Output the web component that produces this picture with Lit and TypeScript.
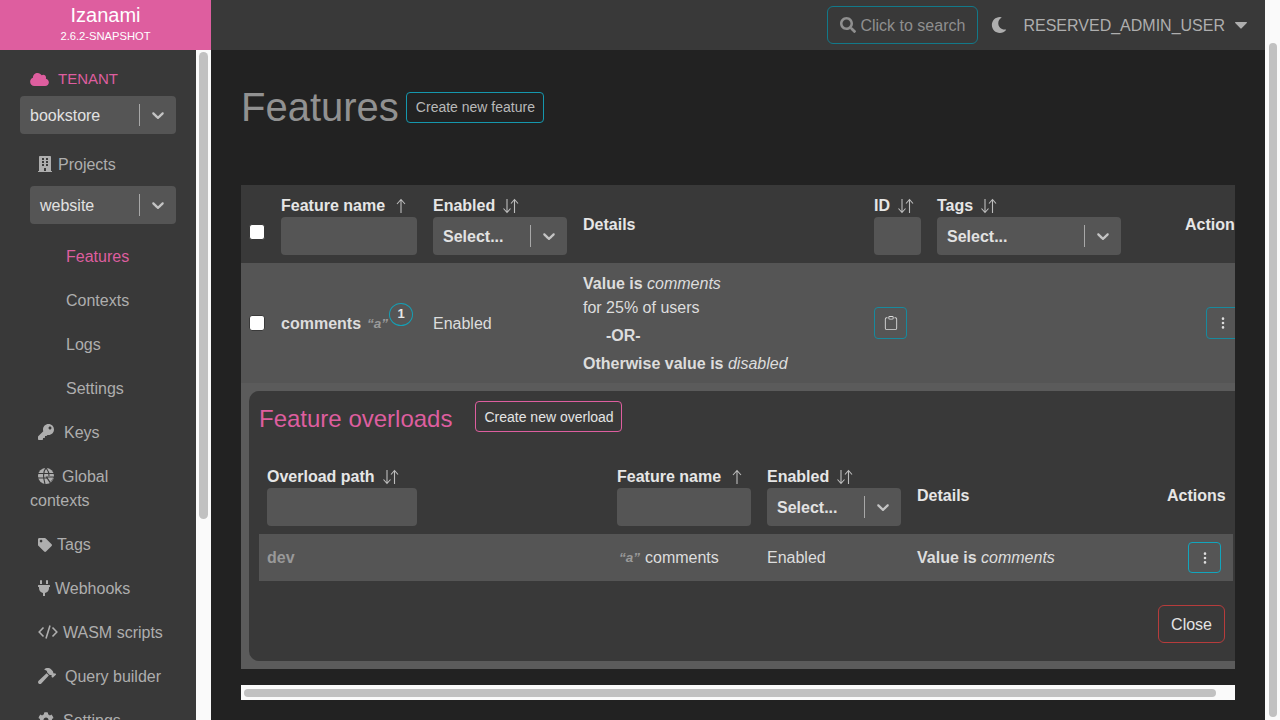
import { LitElement, html, css, svg } from 'lit';
import { customElement } from 'lit/decorators.js';

const ICONS: Record<string, [string, string]> = {
  cloud: ['0 0 640 512', 'M537.6 226.6c4.1-10.7 6.4-22.4 6.4-34.6 0-53-43-96-96-96-19.7 0-38.1 6-53.3 16.2C367 64.2 315.3 32 256 32c-88.4 0-160 71.6-160 160 0 2.7.1 5.4.2 8.1C40.2 219.8 0 273.2 0 336c0 79.5 64.5 144 144 144h368c70.7 0 128-57.3 128-128 0-61.9-44-113.6-102.4-125.4z'],
  building: ['0 0 448 512', 'M436 480h-20V24c0-13.255-10.745-24-24-24H56C42.745 0 32 10.745 32 24v456H12c-6.627 0-12 5.373-12 12v20h448v-20c0-6.627-5.373-12-12-12zM128 76c0-6.627 5.373-12 12-12h40c6.627 0 12 5.373 12 12v40c0 6.627-5.373 12-12 12h-40c-6.627 0-12-5.373-12-12V76zm0 96c0-6.627 5.373-12 12-12h40c6.627 0 12 5.373 12 12v40c0 6.627-5.373 12-12 12h-40c-6.627 0-12-5.373-12-12v-40zm52 148h-40c-6.627 0-12-5.373-12-12v-40c0-6.627 5.373-12 12-12h40c6.627 0 12 5.373 12 12v40c0 6.627-5.373 12-12 12zm76 160h-64v-84c0-6.627 5.373-12 12-12h40c6.627 0 12 5.373 12 12v84zm64-172c0 6.627-5.373 12-12 12h-40c-6.627 0-12-5.373-12-12v-40c0-6.627 5.373-12 12-12h40c6.627 0 12 5.373 12 12v40zm0-96c0 6.627-5.373 12-12 12h-40c-6.627 0-12-5.373-12-12v-40c0-6.627 5.373-12 12-12h40c6.627 0 12 5.373 12 12v40zm0-96c0 6.627-5.373 12-12 12h-40c-6.627 0-12-5.373-12-12V76c0-6.627 5.373-12 12-12h40c6.627 0 12 5.373 12 12v40z'],
  key: ['0 0 512 512', 'M512 176.001C512 273.203 433.202 352 336 352c-11.22 0-22.19-1.062-32.827-3.069l-24.012 27.014A23.999 23.999 0 0 1 261.223 384H224v40c0 13.255-10.745 24-24 24h-40v40c0 13.255-10.745 24-24 24H24c-13.255 0-24-10.745-24-24v-78.059c0-6.365 2.529-12.47 7.029-16.971l161.802-161.802C163.108 213.814 160 195.271 160 176 160 78.798 238.797.001 335.999 0 433.488-.001 512 78.511 512 176.001zM336 128c0 26.51 21.49 48 48 48s48-21.49 48-48-21.49-48-48-48-48 21.49-48 48z'],
  tag: ['0 0 512 512', 'M0 252.118V48C0 21.49 21.49 0 48 0h204.118a48 48 0 0 1 33.941 14.059l211.882 211.882c18.745 18.745 18.745 49.137 0 67.882L293.823 497.941c-18.745 18.745-49.137 18.745-67.882 0L14.059 286.059A48 48 0 0 1 0 252.118zM112 64c-26.51 0-48 21.49-48 48s21.49 48 48 48 48-21.49 48-48-21.49-48-48-48z'],
  plug: ['0 0 384 512', 'M320,32a32,32,0,0,0-64,0v96h64Zm48,128H16A16,16,0,0,0,0,176v32a16,16,0,0,0,16,16H32v32A160.07,160.07,0,0,0,160,412.8V512h64V412.8A160.07,160.07,0,0,0,352,256V224h16a16,16,0,0,0,16-16V176A16,16,0,0,0,368,160ZM128,32a32,32,0,0,0-64,0v96h64Z'],
  hammer: ['0 0 576 512', 'M571.31 193.94l-22.63-22.63c-6.25-6.25-16.38-6.25-22.63 0l-11.31 11.31-28.9-28.9c5.63-21.31.36-44.9-16.35-61.61l-45.25-45.25c-62.48-62.48-163.79-62.48-226.28 0l90.51 45.25v18.75c0 16.97 6.74 33.25 18.75 45.25l49.14 49.14c16.71 16.71 40.3 21.98 61.61 16.35l28.9 28.9-11.31 11.31c-6.25 6.25-6.25 16.38 0 22.63l22.63 22.63c6.25 6.25 16.38 6.25 22.63 0l90.51-90.51c6.23-6.24 6.23-16.37-.01-22.62zm-286.72-15.2c-3.7-3.7-6.84-7.79-9.85-11.95L19.64 404.96c-25.57 23.88-26.26 64.19-1.53 88.93s65.05 24.05 88.93-1.53l238.13-255.07c-3.96-2.91-7.9-5.87-11.44-9.41l-49.14-49.14z'],
  gear: ['0 0 512 512', 'M487.4 315.7l-42.6-24.6c4.3-23.2 4.3-47 0-70.2l42.6-24.6c4.9-2.8 7.1-8.6 5.5-14-11.1-35.6-30-67.8-54.7-94.6-3.8-4.1-10-5.1-14.8-2.3L380.8 110c-17.9-15.4-38.5-27.3-60.8-35.1V25.8c0-5.6-3.9-10.5-9.4-11.7-36.7-8.2-74.3-7.8-109.2 0-5.5 1.2-9.4 6.1-9.4 11.7V75c-22.2 7.9-42.8 19.8-60.8 35.1L88.7 85.5c-4.9-2.8-11-1.9-14.8 2.3-24.7 26.7-43.6 58.9-54.7 94.6-1.7 5.4.6 11.2 5.5 14L67.3 221c-4.3 23.2-4.3 47 0 70.2l-42.6 24.6c-4.9 2.8-7.1 8.6-5.5 14 11.1 35.6 30 67.8 54.7 94.6 3.8 4.1 10 5.1 14.8 2.3l42.6-24.6c17.9 15.4 38.5 27.3 60.8 35.1v49.2c0 5.6 3.9 10.5 9.4 11.7 36.7 8.2 74.3 7.8 109.2 0 5.5-1.2 9.4-6.1 9.4-11.7v-49.2c22.2-7.9 42.8-19.8 60.8-35.1l42.6 24.6c4.9 2.8 11 1.9 14.8-2.3 24.7-26.7 43.6-58.9 54.7-94.6 1.5-5.5-.7-11.3-5.6-14.1zM256 336c-44.1 0-80-35.9-80-80s35.9-80 80-80 80 35.9 80 80-35.9 80-80 80z'],
  moon: ['0 0 512 512', 'M283.211 512c78.962 0 151.079-35.925 198.857-94.792 7.068-8.708-.639-21.43-11.562-19.35-124.203 23.654-238.262-71.576-238.262-196.954 0-72.222 38.662-138.635 101.498-174.394 9.686-5.512 7.25-20.197-3.756-22.23A258.156 258.156 0 0 0 283.211 0c-141.309 0-256 114.511-256 256 0 141.309 114.511 256 256 256z'],
  search: ['0 0 512 512', 'M505 442.7L405.3 343c-4.5-4.5-10.6-7-17-7H372c27.6-35.3 44-79.7 44-128C416 93.1 322.9 0 208 0S0 93.1 0 208s93.1 208 208 208c48.3 0 92.7-16.4 128-44v16.3c0 6.4 2.5 12.5 7 17l99.7 99.7c9.4 9.4 24.6 9.4 33.9 0l28.3-28.3c9.4-9.4 9.4-24.6.1-34zM208 336c-70.7 0-128-57.2-128-128 0-70.7 57.2-128 128-128 70.7 0 128 57.2 128 128 0 70.7-57.2 128-128 128z'],
  clipboard: ['0 0 16 16', 'M4 1.5H3a2 2 0 0 0-2 2V14a2 2 0 0 0 2 2h10a2 2 0 0 0 2-2V3.5a2 2 0 0 0-2-2h-1v1h1a1 1 0 0 1 1 1V14a1 1 0 0 1-1 1H3a1 1 0 0 1-1-1V3.5a1 1 0 0 1 1-1h1v-1zM9.5 1a.5.5 0 0 1 .5.5v1a.5.5 0 0 1-.5.5h-3a.5.5 0 0 1-.5-.5v-1a.5.5 0 0 1 .5-.5h3zm-3-1A1.5 1.5 0 0 0 5 1.5v1A1.5 1.5 0 0 0 6.5 4h3A1.5 1.5 0 0 0 11 2.5v-1A1.5 1.5 0 0 0 9.5 0h-3z'],
  dots: ['0 0 16 16', 'M9.5 13a1.5 1.5 0 1 1-3 0 1.5 1.5 0 0 1 3 0zm0-5a1.5 1.5 0 1 1-3 0 1.5 1.5 0 0 1 3 0zm0-5a1.5 1.5 0 1 1-3 0 1.5 1.5 0 0 1 3 0z'],
  chevron: ['0 0 20 20', 'M4.516 7.548c0.436-0.446 1.043-0.481 1.576 0l3.908 3.747 3.908-3.747c0.533-0.481 1.141-0.446 1.574 0 0.436 0.445 0.408 1.197 0 1.615-0.406 0.418-4.695 4.502-4.695 4.502-0.217 0.223-0.502 0.335-0.787 0.335s-0.57-0.112-0.789-0.335c0 0-4.287-4.084-4.695-4.502s-0.436-1.17 0-1.615z'],
  caret: ['0 0 12 7', 'M0.6 0h10.8c.5 0 .8.6.4 1L6.4 6.6c-.2.2-.6.2-.8 0L.2 1C-.2.6.1 0 .6 0z'],
};

const icon = (name: string, w: number, h = w) => {
  const [box, d] = ICONS[name];
  return html`<svg class="icon" width=${w} height=${h} viewBox=${box} fill="currentColor"><path d=${d}></path></svg>`;
};

// the reference globe: a disc cut by grid lines with a small down triangle at the lower right
const globeIcon = html`<svg class="icon" width="16" height="16" viewBox="0 0 16 16">
  <circle cx="8" cy="8" r="8" fill="currentColor"></circle>
  <path d="M0 5.5h16M0 10h9M8 0C5 3 5 9 7 16M8 0c2 2 3 4 3 8" fill="none" stroke="#393939" stroke-width="1.1"></path>
  <path d="M7.5 8.5h9L12 15.5z" fill="#393939"></path>
  <path d="M9.5 9.5h6L12.5 14z" fill="currentColor"></path>
</svg>`;

const codeIcon = html`<svg class="icon" width="20" height="16" viewBox="0 0 20 16" fill="none" stroke="currentColor" stroke-width="1.6">
  <path d="M5.5 3.5 1.2 8l4.3 4.5M14.5 3.5 18.8 8l-4.3 4.5M12 1.5 8 14.5"></path>
</svg>`;

// thin sort arrows, both or only the up one when the column is sorted
const sortIcon = (upOnly = false) => html`<svg class="sort" width="18" height="16" viewBox="0 0 18 16" fill="none" stroke="currentColor" stroke-width="1.1">
  ${upOnly
    ? svg`<path d="M9 15V1.5M5 6l4-4.5L13 6"></path>`
    : svg`<path d="M5 1v13.5M1.5 10.5 5 14.5l3.5-4M12.5 15V1.5M9 5.5l3.5-4 3.5 4"></path>`}
</svg>`;

const select = (label: string, cls = '') => html`<div class="select ${cls}">
  <span class="select-value">${label}</span>
  <span class="select-sep"></span>
  <span class="select-arrow">${icon('chevron', 20)}</span>
</div>`;

const column = (label: string, sort: boolean, filter: unknown) => html`<div class="cell head-cell">
  <div class="head-title">${label}${sortIcon(sort)}</div>
  ${filter}
</div>`;

@customElement('app-root')
export class AppRoot extends LitElement {
  static styles = css`
    :host {
      display: grid;
      grid-template-columns: 211px 1fr 15px;
      width: 1280px;
      height: 720px;
      overflow: hidden;
      background: #222222;
      color: #dddddd;
      font-family: 'Liberation Sans', Arial, sans-serif;
      font-size: 16px;
      line-height: 24px;
    }
    .icon { display: block; flex: none; }

    .side { display: flex; flex-direction: column; height: 720px; overflow: hidden; }
    .logo {
      height: 50px;
      flex: none;
      box-sizing: border-box;
      padding-top: 3px;
      background: #de5e9f;
      color: #ffffff;
      text-align: center;
    }
    .logo-name { font-size: 20px; line-height: 24px; }
    .logo-version { font-size: 11.2px; line-height: 16px; margin-top: 1px; }
    .side-body { flex: 1; display: flex; min-height: 0; }
    .nav { width: 196px; flex: none; background: #393939; padding-top: 16px; overflow: hidden; color: #aeaeae; }
    .side-bar { width: 15px; flex: none; box-sizing: border-box; background: #fafafa; padding: 2px 3px; }
    .side-thumb { width: 9px; height: 467px; border-radius: 5px; background: #c1c1c1; }
    .tenant {
      display: flex;
      align-items: center;
      gap: 9px;
      margin-left: 30px;
      color: #de5e9f;
      font-size: 15px;
      height: 24px;
      padding-top: 1px;
      margin-bottom: 5px;
    }
    .nav-item { padding: 11px 30px 9px 30px; }
    .nav-item.sub { padding-left: 66px; }
    .nav-item.active { color: #de5e9f; }
    .nav-icon { display: inline-flex; align-items: center; height: 16px; vertical-align: -2px; margin-left: 8px; }

    .select {
      display: flex;
      align-items: center;
      height: 38px;
      box-sizing: border-box;
      border-radius: 4px;
      background: #555555;
      color: #e2e2e2;
      padding-left: 10px;
    }
    .select-value { flex: 1; font-weight: 400; padding-top: 2px; }
    .select-sep { width: 1px; height: 22px; background: #a8a8a8; }
    .select-arrow { width: 36px; display: flex; justify-content: center; color: #c4c4c4; }
    .select.tenant-select { margin: 0 20px 8px; }
    .select.project-select { margin: 0 20px 10px 30px; }
    .select.filter .select-value { font-weight: 700; }
    .select.tags-filter { width: 184px; }

    .content { display: flex; flex-direction: column; height: 720px; min-width: 0; }
    .topbar {
      height: 50px;
      flex: none;
      background: #393939;
      display: flex;
      align-items: center;
      justify-content: flex-end;
      padding-right: 18px;
      color: #aeaeae;
    }
    .search {
      display: flex;
      align-items: center;
      gap: 4px;
      box-sizing: border-box;
      width: 151px;
      height: 38px;
      padding-left: 12px;
      border: 1px solid #12798a;
      border-radius: 6px;
      color: #8f8f8f;
    }
    .topbar-text { padding-top: 2px; }
    .moon { margin: 0 16px 0 13px; }
    .user { margin-right: 10px; }

    .main { flex: 1; min-height: 0; padding: 34px 30px 0; }
    .title-row { display: flex; align-items: center; gap: 7px; height: 46px; margin-bottom: 55px; }
    h1 { margin: 0; font-size: 40px; line-height: 46px; font-weight: 400; color: #919191; }
    .btn {
      box-sizing: border-box;
      background: transparent;
      font: inherit;
      border: 1px solid #1597ad;
      border-radius: 4px;
      color: #b9b9b9;
      display: inline-flex;
      align-items: center;
      justify-content: center;
    }
    .btn-sm { height: 31px; padding: 0 8px 0 9px; font-size: 14px; line-height: 21px; }
    .btn-icon { width: 33px; height: 32px; padding: 0; color: #dddddd; border-color: #178a9e; }
    .btn-pink { border-color: #de5e9f; color: #e4e4e4; padding: 2px 7px 0 8px; }
    .btn-close { height: 38px; padding: 2px 12px 0; border-color: #b73c3c; color: #e4e4e4; border-radius: 6px; }

    .table-wrap { width: 994px; overflow: hidden; }
    .table { width: 1010px; }
    .row { display: grid; grid-template-columns: 32px 152px 150px 291px 63px 248px 74px; }
    .row.head { background: #393939; }
    .row.body { background: #555555; height: 120px; }
    .cell { padding: 8px; min-width: 0; display: flex; flex-direction: column; justify-content: center; }
    .cell.t { padding-top: 9px; padding-bottom: 7px; }
    .head-cell { justify-content: flex-start; }
    .head-title {
      display: flex;
      align-items: center;
      gap: 7px;
      box-sizing: border-box;
      height: 24px;
      padding-top: 2px;
      font-weight: 700;
      color: #e6e6e6;
      white-space: nowrap;
    }
    .sort { color: #bdbdbd; flex: none; }
    .head-plain { font-weight: 700; color: #e6e6e6; white-space: nowrap; }
    .input { height: 38px; border-radius: 4px; background: #555555; }
    .input.path { width: 150px; }
    .check {
      appearance: none;
      box-sizing: border-box;
      width: 16px;
      height: 16px;
      margin: 0;
      background: #ffffff;
      border: 1px solid #3a3a3a;
      border-radius: 3px;
    }
    .check.head-check { margin-top: 16px; border-color: #393939; }
    .name { font-weight: 700; }
    .name-line { display: flex; align-items: center; white-space: nowrap; }
    .alias { font-style: italic; font-weight: 700; font-size: 13.5px; color: #9a9a9a; margin-left: 6px; }
    .count { position: relative; width: 0; height: 24px; }
    .count-badge {
      position: absolute;
      left: 1px;
      top: -9px;
      box-sizing: border-box;
      width: 24px;
      height: 23px;
      border: 1.5px solid #14a0b6;
      border-radius: 50%;
      color: #e8e8e8;
      font-size: 13px;
      font-weight: 700;
      line-height: 20px;
      text-align: center;
    }
    .or { font-weight: 700; margin: 4px 0; padding-left: 23px; }
    b { font-weight: 700; }
    .details-line { white-space: nowrap; }
    .action-btn { margin-left: 21px; }

    .expand { background: #5b5b5b; padding: 8px; width: 1010px; box-sizing: border-box; }
    .panel { background: #393939; border-radius: 10px 0 0 10px; padding: 10px 10px 18px; height: 270px; box-sizing: border-box; }
    .panel-head { display: flex; align-items: center; gap: 23px; height: 31px; margin-bottom: 24px; }
    h2 { margin: 0; padding-top: 4px; font-size: 24px; line-height: 34px; font-weight: 400; color: #de5e9f; }
    .sub-row { display: grid; grid-template-columns: 350px 150px 150px 250px 74px; }
    .sub-row.body { height: 47px; align-items: center; background: #555555; }
    .sub-row .cell { padding: 0 8px; }
    .sub-row.head-row .cell { padding: 8px; }
    .sub-row.head-row .cell.t { padding: 9px 8px 7px; }
    .dev { font-weight: 700; color: #999999; }
    .inline { display: flex; align-items: center; white-space: nowrap; }
    .alias.lead { margin: 0 5px 0 2px; }
    .btn-icon.bright { border-color: #12a5bd; height: 31px; }
    .panel-foot { display: flex; justify-content: flex-end; padding: 24px 8px 0 0; }

    .h-scroll { width: 994px; height: 15px; margin-top: 16px; box-sizing: border-box; background: #fafafa; padding: 4px 3px; }
    .h-thumb { width: 972px; height: 8px; border-radius: 4px; background: #c1c1c1; }

    .page-bar { background: #fafafa; padding: 43px 3px 3px 4px; height: 720px; box-sizing: border-box; }
    .page-thumb { width: 8px; height: 100%; border-radius: 4px; background: #c1c1c1; }
  `;

  private navItem(glyph: unknown, gap: number, label: string) {
    return html`<div class="nav-item"><span class="nav-icon">${glyph}</span><span style="margin-left:${gap}px">${label}</span></div>`;
  }

  render() {
    return html`
      <aside class="side">
        <div class="logo">
          <div class="logo-name">Izanami</div>
          <div class="logo-version">2.6.2-SNAPSHOT</div>
        </div>
        <div class="side-body">
          <nav class="nav">
            <div class="tenant">${icon('cloud', 19, 15)}TENANT</div>
            ${select('bookstore', 'tenant-select')}
            ${this.navItem(icon('building', 14, 16), 6, 'Projects')}
            ${select('website', 'project-select')}
            <div class="nav-item sub active">Features</div>
            <div class="nav-item sub">Contexts</div>
            <div class="nav-item sub">Logs</div>
            <div class="nav-item sub">Settings</div>
            ${this.navItem(icon('key', 16), 10, 'Keys')}
            ${this.navItem(globeIcon, 8, 'Global contexts')}
            ${this.navItem(icon('tag', 14), 5, 'Tags')}
            ${this.navItem(icon('plug', 12, 16), 5, 'Webhooks')}
            ${this.navItem(codeIcon, 5, 'WASM scripts')}
            ${this.navItem(icon('hammer', 18, 16), 9, 'Query builder')}
            ${this.navItem(icon('gear', 16), 9, 'Settings')}
          </nav>
          <div class="side-bar"><div class="side-thumb"></div></div>
        </div>
      </aside>

      <div class="content">
        <header class="topbar">
          <div class="search">${icon('search', 16)}<span class="topbar-text">Click to search</span></div>
          <span class="moon">${icon('moon', 16)}</span>
          <span class="user topbar-text">RESERVED_ADMIN_USER</span>
          ${icon('caret', 12, 7)}
        </header>
        <main class="main">
          <div class="title-row">
            <h1>Features</h1>
            <button class="btn btn-sm">Create new feature</button>
          </div>
          <div class="table-wrap">
            <div class="table">
              <div class="row head">
                <div class="cell"><input class="check head-check" type="checkbox" /></div>
                ${column('Feature name', true, html`<div class="input"></div>`)}
                ${column('Enabled', false, select('Select...', 'filter'))}
                <div class="cell t"><span class="head-plain">Details</span></div>
                ${column('ID', false, html`<div class="input"></div>`)}
                ${column('Tags', false, select('Select...', 'filter tags-filter'))}
                <div class="cell t"><span class="head-plain">Actions</span></div>
              </div>
              <div class="row body">
                <div class="cell"><input class="check" type="checkbox" /></div>
                <div class="cell t">
                  <div class="name-line">
                    <span class="name">comments</span><span class="alias">“a”</span>
                    <span class="count"><span class="count-badge">1</span></span>
                  </div>
                </div>
                <div class="cell t">Enabled</div>
                <div class="cell t">
                  <div class="details-line"><b>Value is</b> <i>comments</i></div>
                  <div class="details-line">for 25% of users</div>
                  <div class="or">-OR-</div>
                  <div class="details-line"><b>Otherwise value is</b> <i>disabled</i></div>
                </div>
                <div class="cell"><button class="btn btn-icon">${icon('clipboard', 14)}</button></div>
                <div class="cell"></div>
                <div class="cell"><button class="btn btn-icon action-btn">${icon('dots', 14)}</button></div>
              </div>
              <div class="expand">
                <div class="panel">
                  <div class="panel-head">
                    <h2>Feature overloads</h2>
                    <button class="btn btn-sm btn-pink">Create new overload</button>
                  </div>
                  <div class="sub-row head-row">
                    ${column('Overload path', false, html`<div class="input path"></div>`)}
                    ${column('Feature name', true, html`<div class="input"></div>`)}
                    ${column('Enabled', false, select('Select...', 'filter'))}
                    <div class="cell t"><span class="head-plain">Details</span></div>
                    <div class="cell t"><span class="head-plain">Actions</span></div>
                  </div>
                  <div class="sub-row body">
                    <div class="cell"><span class="dev">dev</span></div>
                    <div class="cell"><div class="inline"><span class="alias lead">“a”</span>comments</div></div>
                    <div class="cell">Enabled</div>
                    <div class="cell"><div class="details-line"><b>Value is</b> <i>comments</i></div></div>
                    <div class="cell"><button class="btn btn-icon bright action-btn">${icon('dots', 14)}</button></div>
                  </div>
                  <div class="panel-foot"><button class="btn btn-close">Close</button></div>
                </div>
              </div>
            </div>
          </div>
          <div class="h-scroll"><div class="h-thumb"></div></div>
        </main>
      </div>

      <div class="page-bar"><div class="page-thumb"></div></div>
    `;
  }
}
